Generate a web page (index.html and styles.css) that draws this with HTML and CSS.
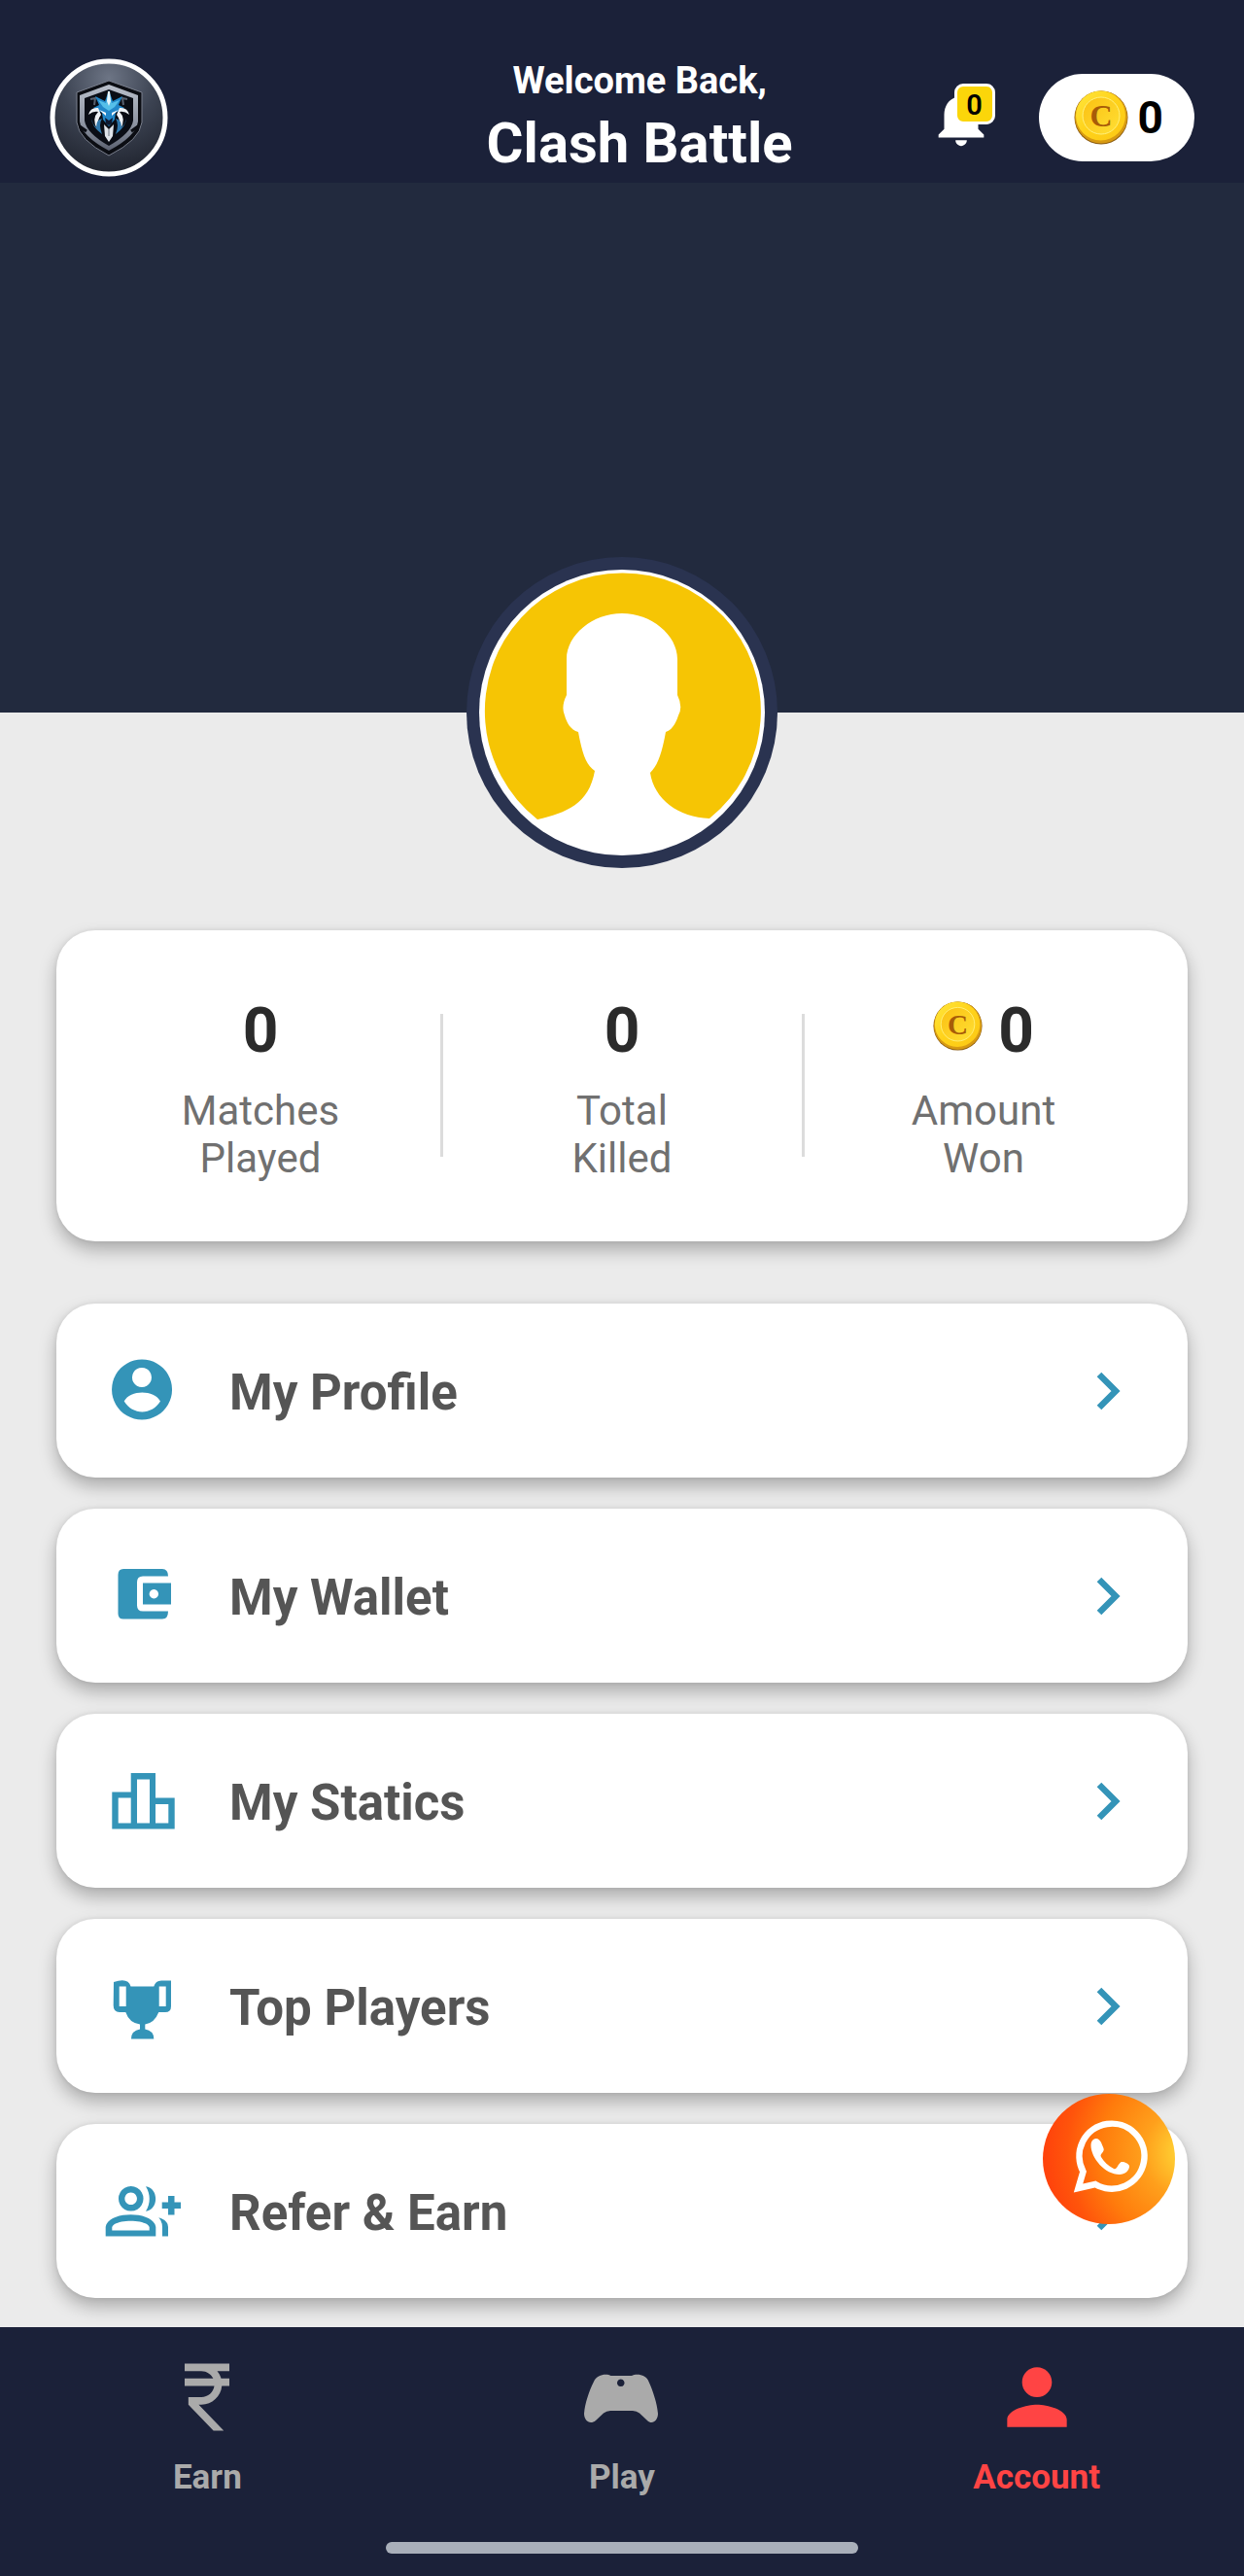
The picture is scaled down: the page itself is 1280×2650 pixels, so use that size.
FILE: index.html
```html
<!DOCTYPE html>
<html lang="en">
<head>
<meta charset="utf-8">
<meta name="viewport" content="width=device-width, initial-scale=1">
<title>Clash Battle – Account</title>
<link rel="stylesheet" href="styles.css">
</head>
<body>
<svg class="defs" aria-hidden="true">
  <defs>
    <linearGradient id="coin-face" x1="0" y1="0" x2="1" y2="1">
      <stop offset="0" stop-color="#ffe63c"/><stop offset=".5" stop-color="#ffd21a"/><stop offset="1" stop-color="#fcc814"/>
    </linearGradient>
    <linearGradient id="coin-core" x1="0" y1="0" x2="1" y2="1">
      <stop offset="0" stop-color="#fbc012"/><stop offset="1" stop-color="#ffe034"/>
    </linearGradient>
    <symbol id="coin" viewBox="0 0 56 56">
      <circle cx="28" cy="28" r="27.500" fill="#8a5a10"/>
      <circle cx="28" cy="27.500" r="27" fill="#d79a12"/>
      <circle cx="27.500" cy="26" r="25.500" fill="url(#coin-face)"/>
      <circle cx="28" cy="26" r="19" fill="url(#coin-core)" stroke="#fff07a" stroke-width="1"/>
      <text x="28" y="37" text-anchor="middle" font-family="Liberation Serif, serif" font-weight="700" font-size="32" fill="#a85c08">C</text>
    </symbol>
    <symbol id="chevron" viewBox="0 0 30 40">
      <path d="M5 3 22 20 5 37" fill="none" stroke="#3494b8" stroke-width="6.500"/>
    </symbol>
  </defs>
</svg>

<header class="topbar">
  <a class="logo" href="#" aria-label="Home">
    <svg viewBox="0 0 122 122">
      <defs>
        <radialGradient id="logo-bg" cx=".5" cy=".15" r=".85">
          <stop offset="0" stop-color="#6d7585"/><stop offset=".5" stop-color="#3c4352"/><stop offset="1" stop-color="#20242f"/>
        </radialGradient>
        <linearGradient id="steel" x1="0" y1="0" x2="0" y2="1">
          <stop offset="0" stop-color="#b9bfca"/><stop offset=".6" stop-color="#8d94a2"/><stop offset="1" stop-color="#5b6170"/>
        </linearGradient>
      </defs>
      <circle cx="61" cy="61" r="58" fill="url(#logo-bg)" stroke="#fff" stroke-width="5"/>
      <path d="M61 23 95 35V66Q93 84 61 100 30 84 28 66V35Z" fill="#0b0d13" stroke="#7a808e" stroke-width="1"/>
      <path d="M61 27 91 38V65Q89 80 61 95 33 80 31 65V38Z" fill="url(#steel)"/>
      <path d="M61 32 86 41V64Q84 77 61 90 38 77 36 64V41Z" fill="#0a0d15"/>
      <path d="M31 70 38 75M91 70 84 75" stroke="#0b0d13" stroke-width="3"/>
      <path d="M42 42 47 41 46 48M80 42 75 41 76 48" fill="none" stroke="#59616f" stroke-width="2"/>
      <path d="M61 33 57 44 47 39 51 48 45 51 54 56 55 63 61 70 67 63 68 56 77 51 71 48 75 39 65 44Z" fill="#2287c9"/>
      <path d="M61 36 58 46 50 43 55 50 61 54 67 50 72 43 64 46Z" fill="#55bfe9"/>
      <path d="M60 34H62L63 44 61 49 59 44Z" fill="#e8f6fc"/>
      <path d="M51 53 58 56 58 59ZM71 53 64 56 64 59Z" fill="#fff"/>
      <path d="M57 61 61 64 65 61 64 67 61 69 58 67Z" fill="#0d1830"/>
      <path d="M50 51Q42 50 40 58 45 54 50 55 43 62 49 73 49 63 53 58ZM72 51Q80 50 82 58 77 54 72 55 79 62 73 73 73 63 69 58Z" fill="#eef1f5"/>
      <path d="M43 61Q43 70 54 78 50 68 54 62 48 63 48 71 44 68 43 61ZM79 61Q79 70 68 78 72 68 68 62 74 63 74 71 78 68 79 61Z" fill="#2f78ad"/>
      <path d="M56 68 61 73 66 68 65 80 61 86 57 80Z" fill="#dfe4ea"/>
      <path d="M61 73V80" stroke="#6c7684" stroke-width="1"/>
    </svg>
  </a>
  <div class="greeting">
    <p class="greeting-hello">Welcome Back,</p>
    <h1 class="greeting-name">Clash Battle</h1>
  </div>
  <button class="bell" type="button" aria-label="Notifications">
    <svg viewBox="0 0 24 24"><path fill="#fff" d="M12 22c1.100 0 2-.9 2-2h-4c0 1.100.89 2 2 2zm6-6v-5c0-3.070-1.640-5.640-4.500-6.320V4c0-.83-.67-1.500-1.500-1.500s-1.500.67-1.500 1.500v.68C7.630 5.360 6 7.920 6 11v5l-2 2v1h16v-1l-2-2z"/></svg>
    <span class="bell-badge">0</span>
  </button>
  <button class="balance" type="button">
    <svg class="balance-coin"><use href="#coin"/></svg>
    <span>0</span>
  </button>
</header>

<main class="content">
  <section class="hero">
    <svg class="avatar" viewBox="0 0 320 320" role="img" aria-label="Profile picture">
      <circle cx="160" cy="160" r="160" fill="#2a3350"/>
      <circle cx="160" cy="160" r="147" fill="#fff"/>
      <path fill="#f6c504" d="M73 270A142 142 0 1 1 250 269C218 268 193 249 189 222 197 214 201 202 205 180 213 178 217 166 218 163Q223 154 217 142V105C217 80 190 58 160 58S103 80 103 105V142Q97 154 101 163C103 170 107 178 115 180 119 202 123 214 132 220 126 254 103 263 73 270Z"/>
    </svg>
  </section>

  <section class="card stats" aria-label="Statistics">
    <div class="stat"><p class="stat-value">0</p><p class="stat-label">Matches<br>Played</p></div>
    <div class="stat"><p class="stat-value">0</p><p class="stat-label">Total<br>Killed</p></div>
    <div class="stat"><p class="stat-value"><svg class="stat-coin"><use href="#coin"/></svg>0</p><p class="stat-label">Amount<br>Won</p></div>
  </section>

  <nav class="menu" aria-label="Account">
    <a class="card menu-item" href="#profile">
      <svg class="menu-icon" viewBox="0 0 80 80"><path fill="#3494b8" fill-rule="evenodd" d="M40 7.500a31 31 0 1 0 .1 0ZM40 16a10 10 0 1 1-.1 0ZM21.700 50.500C28 38.500 52.600 38.500 59 50.500 50 65 30.600 65 21.700 50.500Z"/></svg>
      <span class="menu-label">My Profile</span>
      <svg class="menu-arrow"><use href="#chevron"/></svg>
    </a>
    <a class="card menu-item" href="#wallet">
      <svg class="menu-icon" viewBox="0 0 80 80"><path fill="#3494b8" fill-rule="evenodd" d="M21 12H61Q67 12 67 19.500H41Q35 19.500 35 25.500V49.500Q35 55.500 41 55.500H67Q67 63.500 61 63.500H21Q15.500 63.500 15.500 58V18Q15.500 12 21 12ZM41 26.500H70V48.500H41ZM52.300 33a4.700 4.700 0 1 0 .1 0Z"/></svg>
      <span class="menu-label">My Wallet</span>
      <svg class="menu-arrow"><use href="#chevron"/></svg>
    </a>
    <a class="card menu-item" href="#statics">
      <svg class="menu-icon" viewBox="0 0 80 80"><path fill="#3494b8" fill-rule="evenodd" d="M9.300 30.500H28.700V11H54V36.500H73.700V68.500H9.300ZM15.700 36.500V62.500H28.700V36.500ZM35 17.500V62.500H48V17.500ZM54 43V62.500H67.300V43Z"/></svg>
      <span class="menu-label">My Statics</span>
      <svg class="menu-arrow"><use href="#chevron"/></svg>
    </a>
    <a class="card menu-item" href="#top-players">
      <svg class="menu-icon" viewBox="0 0 80 80"><path fill="#3494b8" fill-rule="evenodd" d="M11 15Q26 10 28.500 19.500H52.300Q54 13.500 60 13.500H70V40Q70 46 64 46H57.300Q53 57 43.300 58.500V63.500Q52.300 65 52.300 73.500H29Q29 65 38 63.500V58.500Q27 57 23.300 46H17Q10.700 46 10.700 39ZM16.700 19.500V40H23.700V19.500ZM57.700 19.500V40H64.700V19.500Z"/></svg>
      <span class="menu-label">Top Players</span>
      <svg class="menu-arrow"><use href="#chevron"/></svg>
    </a>
    <a class="card menu-item" href="#refer">
      <svg class="menu-icon" viewBox="0 0 80 80"><path fill="#3494b8" fill-rule="evenodd" d="M28.700 14a12.800 12.800 0 1 0 .1 0ZM28.700 20.500a6.300 6.300 0 1 1-.1 0ZM44 14.300C57.500 16 57.500 38 44 39.800 49 32 49 22 44 14.300ZM2.700 65.500V56C5 39 52 39 54.300 56V65.500ZM9.300 59.500H47.700V56C45 47.500 12 47.500 9.300 56ZM57.300 46.200Q67 49 67 56V65.500H61V56Q61 50 57.300 46.200ZM67 24h6.500v6.500H80v6.500H73.500V43.500H67V37H60.700V30.500H67Z"/></svg>
      <span class="menu-label">Refer &amp; Earn</span>
      <svg class="menu-arrow"><use href="#chevron"/></svg>
    </a>
  </nav>
</main>

<a class="chat" href="#chat" aria-label="Chat with support">
  <svg viewBox="0 0 136 134">
    <defs>
      <radialGradient id="flame" gradientUnits="userSpaceOnUse" cx="152" cy="60" r="150">
        <stop offset="0" stop-color="#ffdc44"/><stop offset=".14" stop-color="#ffc62e"/><stop offset=".32" stop-color="#ffa01c"/><stop offset=".62" stop-color="#ff7c0c"/><stop offset=".85" stop-color="#ff540b"/><stop offset="1" stop-color="#ff430c"/>
      </radialGradient>
    </defs>
    <ellipse cx="68" cy="67" rx="68" ry="67" fill="url(#flame)"/>
    <path d="M36.500 97 41.500 80A33.500 33.500 0 1 1 54 93Z" fill="none" stroke="#fff" stroke-width="6.500"/>
    <path fill="#fff" d="M52 47C55 44.500 58.500 46.500 60 50L62.500 56C64 60 58 61.500 60 65 63 70 67 74 73 77 76 78.500 77 73 80 70.500 82 69 88 71.500 89 74 89.500 79 84 83 79 83 64 83 49.500 66 49.500 53 49.500 50 50.500 48 52 47Z"/>
  </svg>
</a>

<nav class="tabbar" aria-label="Main">
  <div class="tabs">
    <a class="tab" href="#earn">
      <svg viewBox="0 0 24 24"><path fill="currentColor" d="M13.660 7c-.56-1.180-1.760-2-3.160-2H6V3h12v2h-3.260c.48.58.84 1.260 1.050 2H18v2h-2.020c-.25 2.800-2.610 5-5.480 5h-.73l6.730 7h-2.770L7 14v-2h3.500c1.760 0 3.220-1.300 3.460-3H6V7h7.660z"/></svg>
      <span>Earn</span>
    </a>
    <a class="tab" href="#play">
      <svg viewBox="0 0 92 92"><path fill="currentColor" fill-rule="evenodd" d="M34.500 24H56C60 21.500 71 22 73.500 30 78 40 82 52 83 63 83 70 77 75 72 70L64 62.500Q61 60 57 60H34Q30 60 27 62.500L19 70C13 75 7 70 7 63 8 52 12 40 17 30 20 22 31 21.500 34.500 24ZM44.700 27.500a3.800 3.800 0 1 0 .1 0Z"/></svg>
      <span>Play</span>
    </a>
    <a class="tab tab-active" href="#account" aria-current="page">
      <svg viewBox="0 0 24 24"><path fill="currentColor" d="M12 12c2.210 0 4-1.790 4-4s-1.790-4-4-4-4 1.790-4 4 1.790 4 4 4zm0 2c-2.670 0-8 1.340-8 4v2h16v-2c0-2.660-5.330-4-8-4z"/></svg>
      <span>Account</span>
    </a>
  </div>
  <div class="home-indicator"></div>
</nav>
</body>
</html>
```
FILE: styles.css
```css
* {
  box-sizing: border-box;
}

body {
  margin: 0;
  min-height: 100vh;
  display: flex;
  flex-direction: column;
  background: #ebebeb;
  font-family: Roboto, "Liberation Sans", sans-serif;
  color: #2b2b2b;
}

p,
h1 {
  margin: 0;
}

a {
  color: inherit;
  text-decoration: none;
}

button {
  padding: 0;
  border: 0;
  background: none;
  font: inherit;
  color: #000;
}

svg {
  display: block;
  flex: none;
}

.defs {
  position: absolute;
  width: 0;
  height: 0;
}

/* Top bar */

.topbar {
  display: flex;
  align-items: center;
  padding: 54px 51px 0;
  height: 188px;
  background: #1b2139;
}

.logo svg {
  width: 122px;
  height: 122px;
}

.greeting {
  margin: 0 138px 0 auto;
  text-align: center;
  color: #fff;
}

.greeting-hello {
  font-size: 38px;
  line-height: 44px;
  font-weight: 700;
}

.greeting-name {
  margin-top: 8px;
  font-size: 58px;
  line-height: 68px;
  font-weight: 700;
}

.bell {
  position: relative;
}

.bell svg {
  width: 70px;
  height: 70px;
}

.bell-badge {
  position: absolute;
  top: 0;
  right: 0;
  width: 42px;
  height: 42px;
  border: 3px solid #fff;
  border-radius: 9px;
  background: #fbd60a;
  font-size: 29px;
  line-height: 38px;
  font-weight: 600;
  text-align: center;
}

.balance {
  display: flex;
  align-items: center;
  gap: 10px;
  margin-left: 45px;
  padding: 0 32px 0 36px;
  height: 90px;
  border-radius: 45px;
  background: #fff;
  font-size: 46px;
  font-weight: 700;
}

.balance-coin {
  width: 56px;
  height: 56px;
}

/* Profile banner */

.content {
  flex: 1;
}

.hero {
  display: flex;
  justify-content: center;
  align-items: flex-end;
  height: 545px;
  background: #222a3e;
}

.avatar {
  width: 320px;
  height: 320px;
  margin-bottom: -160px;
}

/* Cards */

.card {
  border-radius: 40px;
  background: #fff;
  box-shadow: 0 9px 18px rgba(0, 0, 0, 0.27), 0 0 5px rgba(0, 0, 0, 0.08);
}

.stats {
  display: grid;
  grid-template-columns: repeat(3, 1fr);
  align-items: center;
  margin: 224px 58px 0;
  padding: 66px 24px 61px;
}

.stat {
  position: relative;
  text-align: center;
}

.stat + .stat::before {
  content: "";
  position: absolute;
  left: -1px;
  top: 20px;
  bottom: 26px;
  width: 3px;
  background: #dcdcdc;
}

.stat-value {
  display: flex;
  justify-content: center;
  align-items: center;
  gap: 16px;
  font-size: 64px;
  line-height: 75px;
  font-weight: 700;
}

.stat-coin {
  width: 51px;
  height: 51px;
  margin-bottom: 10px;
}

.stat-label {
  margin-top: 20px;
  font-size: 42px;
  line-height: 49px;
  color: #707070;
}

.menu {
  display: flex;
  flex-direction: column;
  gap: 32px;
  padding: 64px 58px 30px;
}

.menu-item {
  display: flex;
  align-items: center;
  height: 179px;
  padding: 0 66px 0 48px;
}

.menu-icon {
  width: 80px;
  height: 80px;
}

.menu-label {
  flex: 1;
  margin-left: 50px;
  padding-top: 4px;
  font-size: 51px;
  line-height: 60px;
  font-weight: 700;
  color: #555;
}

.menu-arrow {
  width: 30px;
  height: 40px;
}

/* Floating chat button */

.chat {
  position: fixed;
  right: 71px;
  bottom: 362px;
  z-index: 2;
}

.chat svg {
  width: 136px;
  height: 134px;
}

/* Bottom tabs */

.tabbar {
  position: sticky;
  bottom: 0;
  z-index: 1;
  padding: 26px 0 23px;
  background: #1b2139;
}

.tabs {
  display: grid;
  grid-template-columns: repeat(3, 1fr);
}

.tab {
  display: flex;
  flex-direction: column;
  align-items: center;
  gap: 16px;
  font-size: 35px;
  line-height: 41px;
  font-weight: 700;
  color: #aaa;
}

.tab svg {
  width: 92px;
  height: 92px;
}

.tab-active {
  color: #ff4444;
}

.home-indicator {
  width: 38%;
  height: 12px;
  margin: 46px auto 0;
  border-radius: 6px;
  background: #a9afba;
}
```
